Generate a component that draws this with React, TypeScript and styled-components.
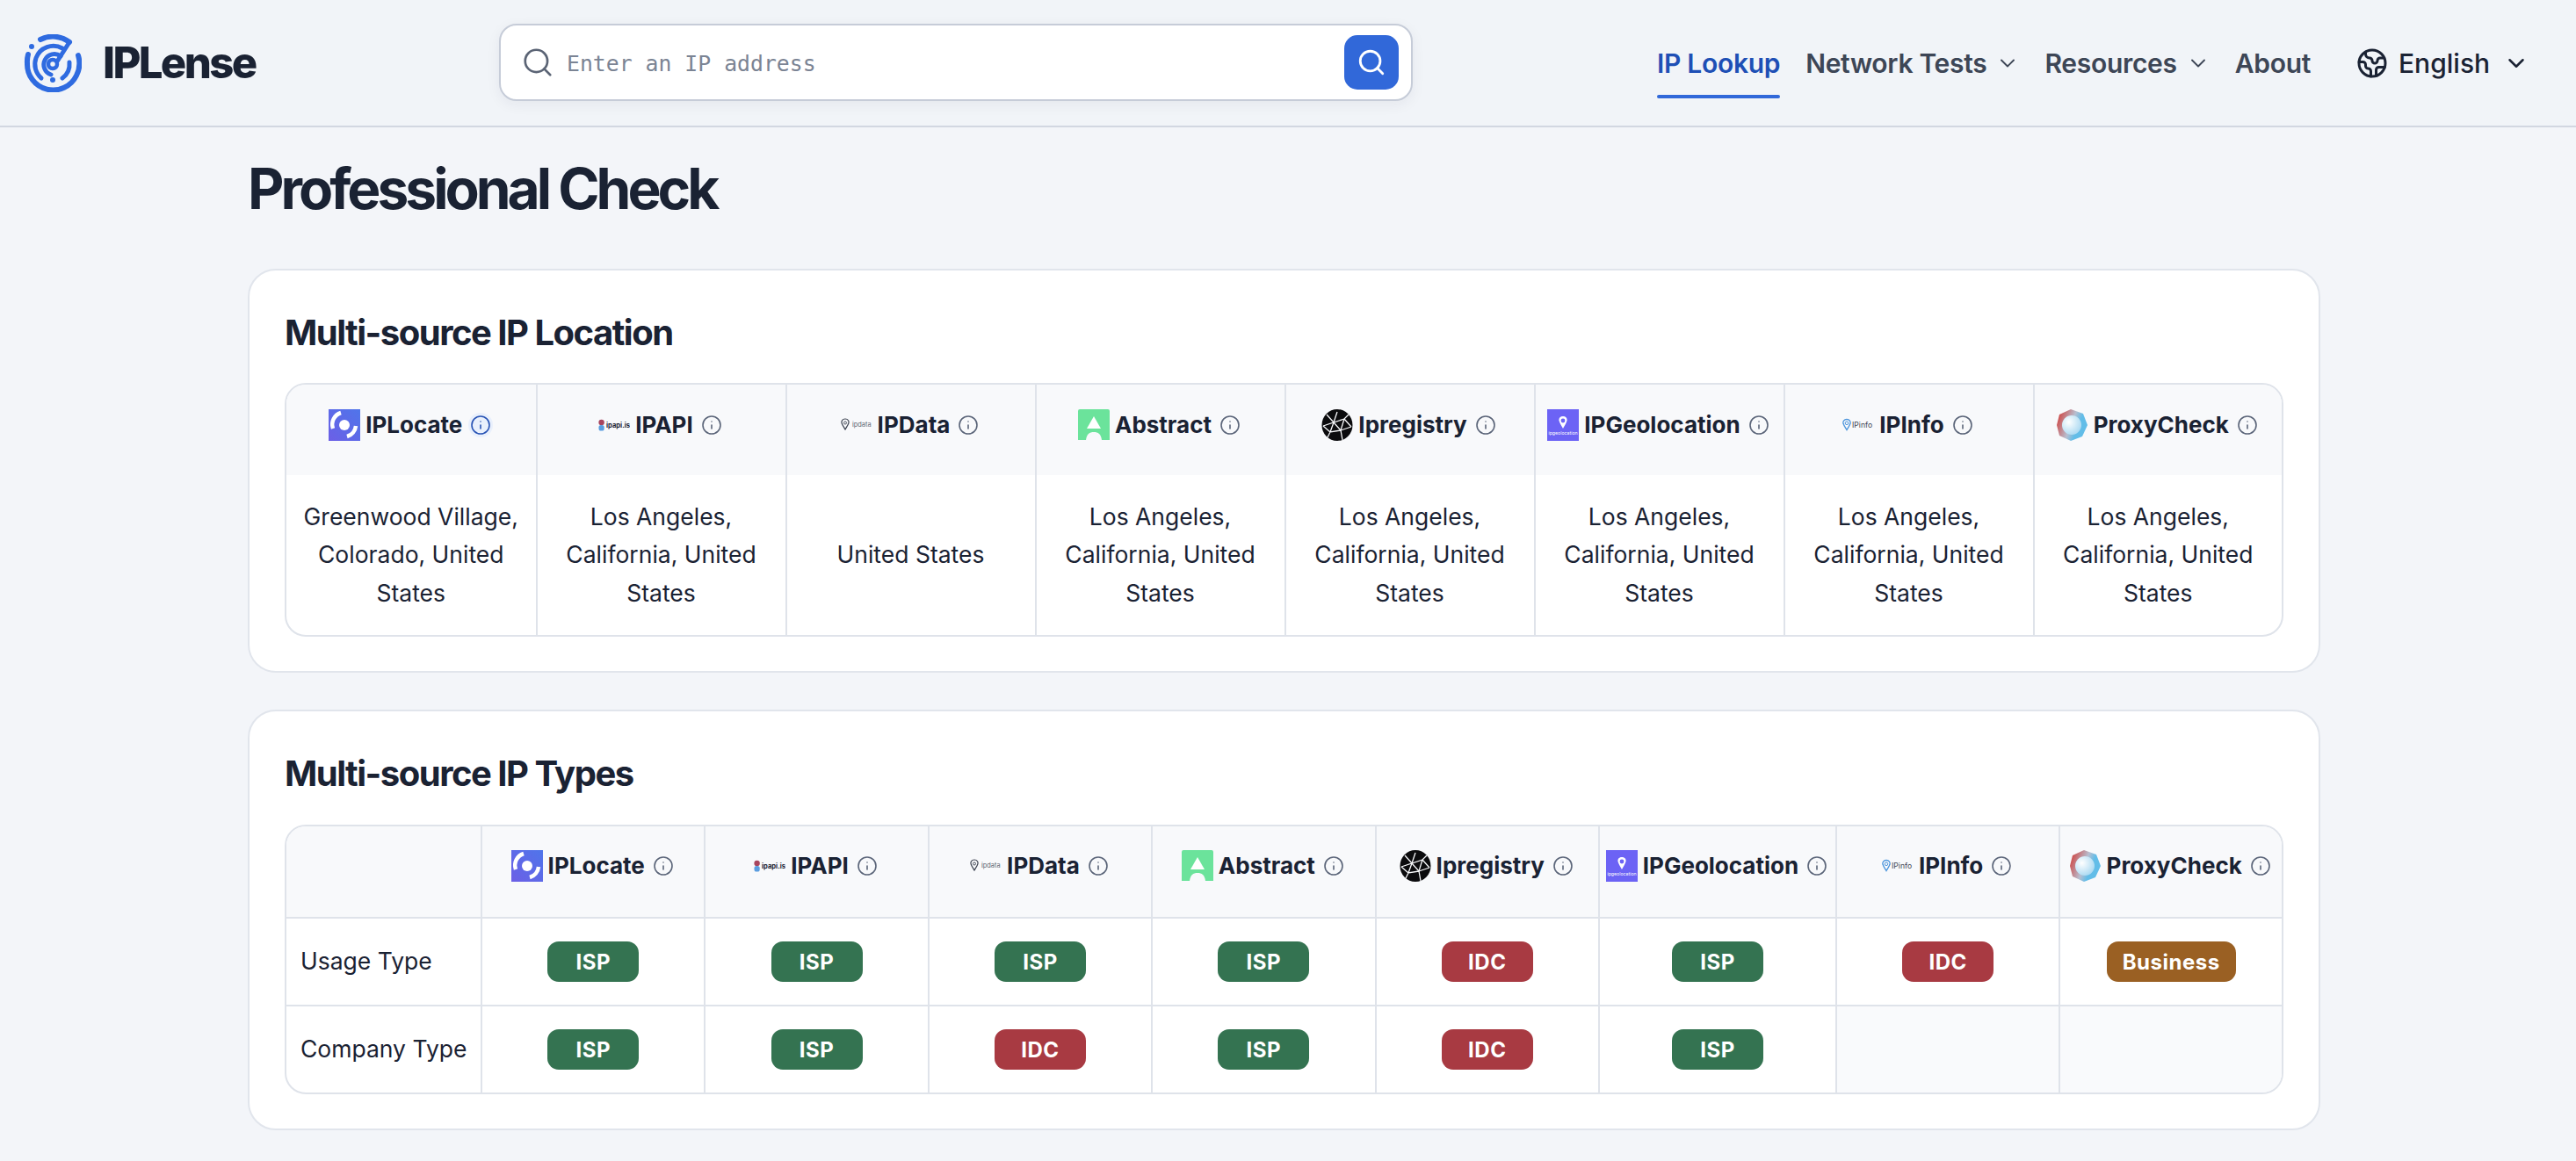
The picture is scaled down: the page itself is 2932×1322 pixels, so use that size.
import React from 'react';
import styled, { createGlobalStyle } from 'styled-components';
import { ChevronDown, Earth, Info, Search } from 'lucide-react';

const GlobalStyle = createGlobalStyle`
  html, body {
    margin: 0;
    padding: 0;
    background: #f3f5f9;
    font-family: Inter, "Liberation Sans", sans-serif;
    color: #1a2233;
  }
  * {
    box-sizing: border-box;
  }
`;

const Page = styled.div`
  width: 2932px;
  height: 1322px;
  overflow: hidden;
`;

const Header = styled.header`
  height: 145px;
  border-bottom: 2px solid #d2d7e1;
  background: #f1f4f8;
  display: grid;
  grid-template-columns: 541px 1040px 1fr;
  align-items: center;
  padding-left: 27px;
`;

const Brand = styled.div`
  display: flex;
  align-items: center;
  gap: 24px;
`;

const BrandName = styled.span`
  font-size: 49px;
  font-weight: 800;
  letter-spacing: -2.6px;
  color: #1a2233;
`;

const SearchBox = styled.div`
  height: 88px;
  margin-top: -1px;
  border: 2px solid #c6ccd8;
  border-radius: 20px;
  background: #fff;
  box-shadow: 0 4px 16px rgba(30, 40, 70, 0.06);
  display: flex;
  align-items: center;
  padding: 0 14px 0 23px;
  gap: 14px;
  color: #5b6475;
`;

const Placeholder = styled.span`
  flex: 1;
  padding-top: 2px;
  font-family: "DejaVu Sans Mono", monospace;
  font-size: 24.8px;
  color: #7b8494;
`;

const SearchButton = styled.button`
  width: 62px;
  height: 62px;
  border: 0;
  border-radius: 15px;
  background: #3168d9;
  color: #fff;
  display: flex;
  align-items: center;
  justify-content: center;
  padding: 0;
`;

const Nav = styled.nav`
  display: flex;
  align-items: center;
  justify-content: flex-start;
  padding-left: 278px;
  height: 100%;
`;

const NavItem = styled.a<{ $active?: boolean; $gap: number }>`
  position: relative;
  display: flex;
  align-items: center;
  gap: 10px;
  margin-right: ${(props) => props.$gap}px;
  font-size: 30px;
  font-weight: 600;
  letter-spacing: -0.3px;
  color: ${(props) => (props.$active ? '#1e4fb5' : '#3d4656')};

  ${(props) => props.$active && `
    &::after {
      content: '';
      position: absolute;
      left: 0;
      right: 0;
      bottom: -22px;
      height: 4px;
      border-radius: 2px;
      background: #3168d9;
    }
  `}
`;

const Language = styled.div`
  display: flex;
  align-items: center;
  margin-left: 23px;
  gap: 12px;
  font-size: 30px;
  font-weight: 500;
  color: #1a2233;
`;

const LanguageArrow = styled.span`
  display: flex;
  margin-left: 3px;
`;

const Main = styled.main`
  width: 2359px;
  margin-left: 282px;
`;

const Title = styled.h1`
  margin: 0;
  height: 161px;
  padding-top: 34px;
  font-size: 64px;
  line-height: 72px;
  font-weight: 700;
  letter-spacing: -4px;
  color: #1a2233;
`;

const Card = styled.section`
  background: #fff;
  border: 2px solid #e1e5ec;
  border-radius: 32px;
  padding: 45px 40px 39px;
  margin-bottom: 42px;
`;

const CardTitle = styled.h2<{ $gap: number }>`
  margin: 0 0 ${(props) => props.$gap}px;
  font-size: 40px;
  line-height: 52px;
  font-weight: 700;
  letter-spacing: -1.5px;
  color: #1a2233;
`;

const Grid = styled.div<{ $columns: string }>`
  display: grid;
  grid-template-columns: ${(props) => props.$columns};
  border: 2px solid #dfe3ea;
  border-radius: 24px;
  overflow: hidden;
`;

const HeadCell = styled.div<{ $divider?: boolean }>`
  height: ${(props) => (props.$divider ? 105 : 103)}px;
  padding-top: ${(props) => (props.$divider ? 27 : 28)}px;
  background: #f8f9fb;
  display: flex;
  justify-content: center;
  align-items: flex-start;
  gap: 6px;
  border-right: 2px solid #dfe3ea;
  border-bottom: ${(props) => (props.$divider ? '2px solid #dfe3ea' : '0')};

  &:nth-child(8n) {
    border-right: 0;
  }
`;

const TypeHeadCell = styled(HeadCell)`
  &:nth-child(8n) {
    border-right: 2px solid #dfe3ea;
  }
  &:nth-child(9n) {
    border-right: 0;
  }
`;

const ProviderName = styled.span`
  font-size: 26px;
  line-height: 36px;
  font-weight: 700;
  color: #1a2233;
`;

const InfoMark = styled.span<{ $active?: boolean }>`
  width: 28px;
  height: 28px;
  margin: 4px 0 0 1px;
  border-radius: 50%;
  display: flex;
  align-items: center;
  justify-content: center;
  background: ${(props) => (props.$active ? '#e9f0fc' : 'transparent')};
  color: ${(props) => (props.$active ? '#2a55b5' : '#5b6579')};
`;

const LocationCell = styled.div`
  height: 182px;
  padding: 0 16px;
  display: flex;
  align-items: center;
  justify-content: center;
  text-align: center;
  font-size: 26.5px;
  line-height: 43.5px;
  color: #1a2233;
  border-right: 2px solid #dfe3ea;

  &:nth-child(8n) {
    border-right: 0;
  }
`;

const RowLabel = styled.div<{ $last?: boolean }>`
  height: ${(props) => (props.$last ? 98 : 100)}px;
  padding: 0 0 3px 16px;
  display: flex;
  align-items: center;
  font-size: 26.5px;
  color: #1a2233;
  border-right: 2px solid #dfe3ea;
  border-bottom: ${(props) => (props.$last ? '0' : '2px solid #dfe3ea')};
`;

const TypeCell = styled.div<{ $last?: boolean; $empty?: boolean; $end?: boolean }>`
  height: ${(props) => (props.$last ? 98 : 100)}px;
  display: flex;
  align-items: center;
  justify-content: center;
  background: ${(props) => (props.$empty ? '#f9fafc' : '#fff')};
  border-right: ${(props) => (props.$end ? '0' : '2px solid #dfe3ea')};
  border-bottom: ${(props) => (props.$last ? '0' : '2px solid #dfe3ea')};
`;

const badgeColors: Record<string, string> = {
  ISP: '#347351',
  IDC: '#a83a42',
  Business: '#9a6023',
};

const Badge = styled.span<{ $kind: string }>`
  height: 46px;
  min-width: 104px;
  padding: 0 18px;
  border-radius: 13px;
  display: flex;
  align-items: center;
  justify-content: center;
  background: ${(props) => badgeColors[props.$kind]};
  color: #fff;
  font-size: 24px;
  font-weight: 700;
  letter-spacing: 0.5px;
`;

const LogoSvg = styled.svg`
  width: 36px;
  height: 36px;
  flex: none;
`;

function BrandMark() {
  return (
    <svg width="66" height="66" viewBox="0 0 66 66" fill="none" stroke="#2f6be0" strokeLinecap="round">
      <path d="M52 9 A31 31 0 0 0 19 6" strokeWidth="6" />
      <path d="M5 23 A30 30 0 0 0 4 33 A29.5 29.5 0 0 0 60 47 A31 31 0 0 0 62 24" strokeWidth="6" />
      <path d="M44 16 A21 21 0 0 0 14 27 A21 21 0 0 0 20 50" strokeWidth="5" />
      <path d="M52 32 A20 20 0 0 1 44 50" strokeWidth="5" />
      <path d="M42 25 A12 12 0 1 0 31 46" strokeWidth="5" />
      <path d="M52 9 L38 31" strokeWidth="5" />
      <circle cx="33" cy="34" r="5" strokeWidth="4.5" />
      <circle cx="33" cy="52" r="3" fill="#2f6be0" stroke="none" />
      <circle cx="9" cy="14" r="3" fill="#2f6be0" stroke="none" />
    </svg>
  );
}

function IpLocateLogo({ id }: { id: string }) {
  return (
    <LogoSvg viewBox="0 0 36 36">
      <defs>
        <linearGradient id={id} x1="1" y1="0" x2="0" y2="1">
          <stop offset="0" stopColor="#4f75ea" />
          <stop offset="1" stopColor="#6c5fe6" />
        </linearGradient>
      </defs>
      <rect width="36" height="36" fill={`url(#${id})`} />
      <circle cx="18" cy="18" r="6" fill="#fff" />
      <path d="M14 4 A14 14 0 0 0 5 22" fill="none" stroke="#fff" strokeWidth="4.5" />
      <path d="M31 19 A14 14 0 0 1 21 31" fill="none" stroke="#fff" strokeWidth="4.5" />
    </LogoSvg>
  );
}

function IpApiLogo() {
  return (
    <LogoSvg viewBox="0 0 36 36">
      <circle cx="3.6" cy="15" r="3.2" fill="#a8455e" />
      <rect x="0.5" y="18" width="6.2" height="6.5" rx="2.6" fill="#5b9ee0" />
      <text x="9" y="21" fontSize="7.6" fontWeight="700" fill="#1a2233" fontFamily="Inter">ipapi.is</text>
    </LogoSvg>
  );
}

function IpDataLogo() {
  return (
    <LogoSvg viewBox="0 0 36 36">
      <path d="M5 11 C1.5 11 0.5 14 1.2 16 C2 18.5 4 21 5 23 C6 21 8 18.5 8.8 16 C9.5 14 8.5 11 5 11 Z" fill="none" stroke="#3c4350" strokeWidth="1.2" />
      <circle cx="5" cy="15.5" r="1.5" fill="none" stroke="#3c4350" strokeWidth="0.9" />
      <text x="13" y="19.5" fontSize="7.4" fill="#5c6470" fontFamily="Inter">ipdata</text>
    </LogoSvg>
  );
}

function AbstractLogo() {
  return (
    <LogoSvg viewBox="0 0 36 36">
      <path d="M2 0 H34 A2 2 0 0 1 36 2 V35 H27 C26 28 23 26 18 26 C13 26 10 28 9 35 H0 V2 A2 2 0 0 1 2 0 Z" fill="#6be39b" />
      <path d="M18 8 L26 22 H10 Z" fill="#fff" />
    </LogoSvg>
  );
}

function IpRegistryLogo() {
  return (
    <LogoSvg viewBox="0 0 36 36">
      <ellipse cx="18" cy="18" rx="17.5" ry="18" fill="#0b0b0d" />
      <g stroke="#f8f9fb" strokeWidth="1.3" fill="none">
        <path d="M6 6 L14 15 L26 11 L31 6" />
        <path d="M14 15 L18 3 M26 11 L22 24 L14 15 L2 19" />
        <path d="M22 24 L34 20 M26 11 L34 20 M22 24 L24 35 M22 24 L10 26 L14 15 M10 26 L7 32 M2 19 L10 26" />
      </g>
    </LogoSvg>
  );
}

function IpGeolocationLogo() {
  return (
    <LogoSvg viewBox="0 0 36 36">
      <rect width="36" height="36" fill="#6c63f5" />
      <path d="M18 8 C14.5 8 13 10.5 13.5 13 C14.2 16 16.8 19.5 18 22 C19.2 19.5 21.8 16 22.5 13 C23 10.5 21.5 8 18 8 Z" fill="#fff" />
      <circle cx="18" cy="13" r="2.4" fill="#6c63f5" />
      <text x="18" y="28.5" textAnchor="middle" fontSize="5.2" fill="#fff" fontFamily="Inter">ipgeolocation</text>
    </LogoSvg>
  );
}

function IpInfoLogo() {
  return (
    <LogoSvg viewBox="0 0 36 36">
      <path d="M5 11.5 C1.8 11.5 0.4 14 1 16.3 C1.8 18.8 4 21.5 5 23.5 C6 21.5 8.2 18.8 9 16.3 C9.6 14 8.2 11.5 5 11.5 Z" fill="none" stroke="#4a94dc" strokeWidth="1.3" />
      <circle cx="5" cy="15.8" r="1.8" fill="none" stroke="#4a94dc" strokeWidth="1" />
      <text x="11" y="20.5" fontSize="8.6" fill="#3c4350" fontFamily="Inter">IPinfo</text>
    </LogoSvg>
  );
}

function ProxyCheckLogo({ id }: { id: string }) {
  return (
    <LogoSvg viewBox="0 0 36 36">
      <defs>
        <linearGradient id={`${id}-ring`} x1="0" y1="0.2" x2="1" y2="0.6">
          <stop offset="0" stopColor="#d0403c" />
          <stop offset="0.5" stopColor="#b8bfd0" />
          <stop offset="0.72" stopColor="#62bde8" />
          <stop offset="1" stopColor="#62bde8" />
        </linearGradient>
        <radialGradient id={`${id}-core`} cx="0.35" cy="0.35" r="0.8">
          <stop offset="0" stopColor="#ffffff" />
          <stop offset="1" stopColor="#9fd4f0" />
        </radialGradient>
      </defs>
      <path d="M16 0 L30 5 L35 18 L29 31 L16 36 L3 30 L0 18 L3 6 Z" fill={`url(#${id}-ring)`} />
      <circle cx="17" cy="18" r="11" fill={`url(#${id}-core)`} />
    </LogoSvg>
  );
}

const providers = [
  { name: 'IPLocate', logo: (id: string) => <IpLocateLogo id={id} /> },
  { name: 'IPAPI', logo: () => <IpApiLogo /> },
  { name: 'IPData', logo: () => <IpDataLogo /> },
  { name: 'Abstract', logo: () => <AbstractLogo /> },
  { name: 'Ipregistry', logo: () => <IpRegistryLogo /> },
  { name: 'IPGeolocation', logo: () => <IpGeolocationLogo /> },
  { name: 'IPInfo', logo: () => <IpInfoLogo /> },
  { name: 'ProxyCheck', logo: (id: string) => <ProxyCheckLogo id={id} /> },
];

const LA = 'Los Angeles, California, United States';
const locations = ['Greenwood Village, Colorado, United States', LA, 'United States', LA, LA, LA, LA, LA];

const typeRows = [
  { label: 'Usage Type', values: ['ISP', 'ISP', 'ISP', 'ISP', 'IDC', 'ISP', 'IDC', 'Business'] },
  { label: 'Company Type', values: ['ISP', 'ISP', 'IDC', 'ISP', 'IDC', 'ISP', '', ''] },
];

function App() {
  return (
    <Page>
      <GlobalStyle />
      <Header>
        <Brand>
          <BrandMark />
          <BrandName>IPLense</BrandName>
        </Brand>
        <SearchBox>
          <Search size={38} strokeWidth={1.7} />
          <Placeholder>Enter an IP address</Placeholder>
          <SearchButton>
            <Search size={34} strokeWidth={2} />
          </SearchButton>
        </SearchBox>
        <Nav>
          <NavItem $active $gap={29}>IP Lookup</NavItem>
          <NavItem $gap={28}>
            Network Tests
            <ChevronDown size={28} strokeWidth={1.6} />
          </NavItem>
          <NavItem $gap={28}>
            Resources
            <ChevronDown size={28} strokeWidth={1.6} />
          </NavItem>
          <NavItem $gap={29}>About</NavItem>
          <Language>
            <Earth size={36} strokeWidth={2} />
            English
            <LanguageArrow>
              <ChevronDown size={30} strokeWidth={2} />
            </LanguageArrow>
          </Language>
        </Nav>
      </Header>
      <Main>
        <Title>Professional Check</Title>
        <Card>
          <CardTitle $gap={31}>Multi-source IP Location</CardTitle>
          <Grid $columns="285.5px repeat(6, 284px) 1fr">
            {providers.map((provider, index) => (
              <HeadCell key={provider.name}>
                {provider.logo(`location-${index}`)}
                <ProviderName>{provider.name}</ProviderName>
                <InfoMark $active={index === 0}>
                  <Info size={24} strokeWidth={1.6} />
                </InfoMark>
              </HeadCell>
            ))}
            {locations.map((location, index) => (
              <LocationCell key={index}>{location}</LocationCell>
            ))}
          </Grid>
        </Card>
        <Card>
          <CardTitle $gap={32}>Multi-source IP Types</CardTitle>
          <Grid $columns="223px repeat(5, 254.4px) 270px 254.4px 1fr">
            <TypeHeadCell $divider />
            {providers.map((provider, index) => (
              <TypeHeadCell $divider key={provider.name}>
                {provider.logo(`types-${index}`)}
                <ProviderName>{provider.name}</ProviderName>
                <InfoMark>
                  <Info size={24} strokeWidth={1.6} />
                </InfoMark>
              </TypeHeadCell>
            ))}
            {typeRows.map((row, rowIndex) => {
              const last = rowIndex === typeRows.length - 1;
              return (
                <React.Fragment key={row.label}>
                  <RowLabel $last={last}>{row.label}</RowLabel>
                  {row.values.map((value, index) => (
                    <TypeCell key={index} $last={last} $empty={!value} $end={index === row.values.length - 1}>
                      {value && <Badge $kind={value}>{value}</Badge>}
                    </TypeCell>
                  ))}
                </React.Fragment>
              );
            })}
          </Grid>
        </Card>
      </Main>
    </Page>
  );
}

export default App;
